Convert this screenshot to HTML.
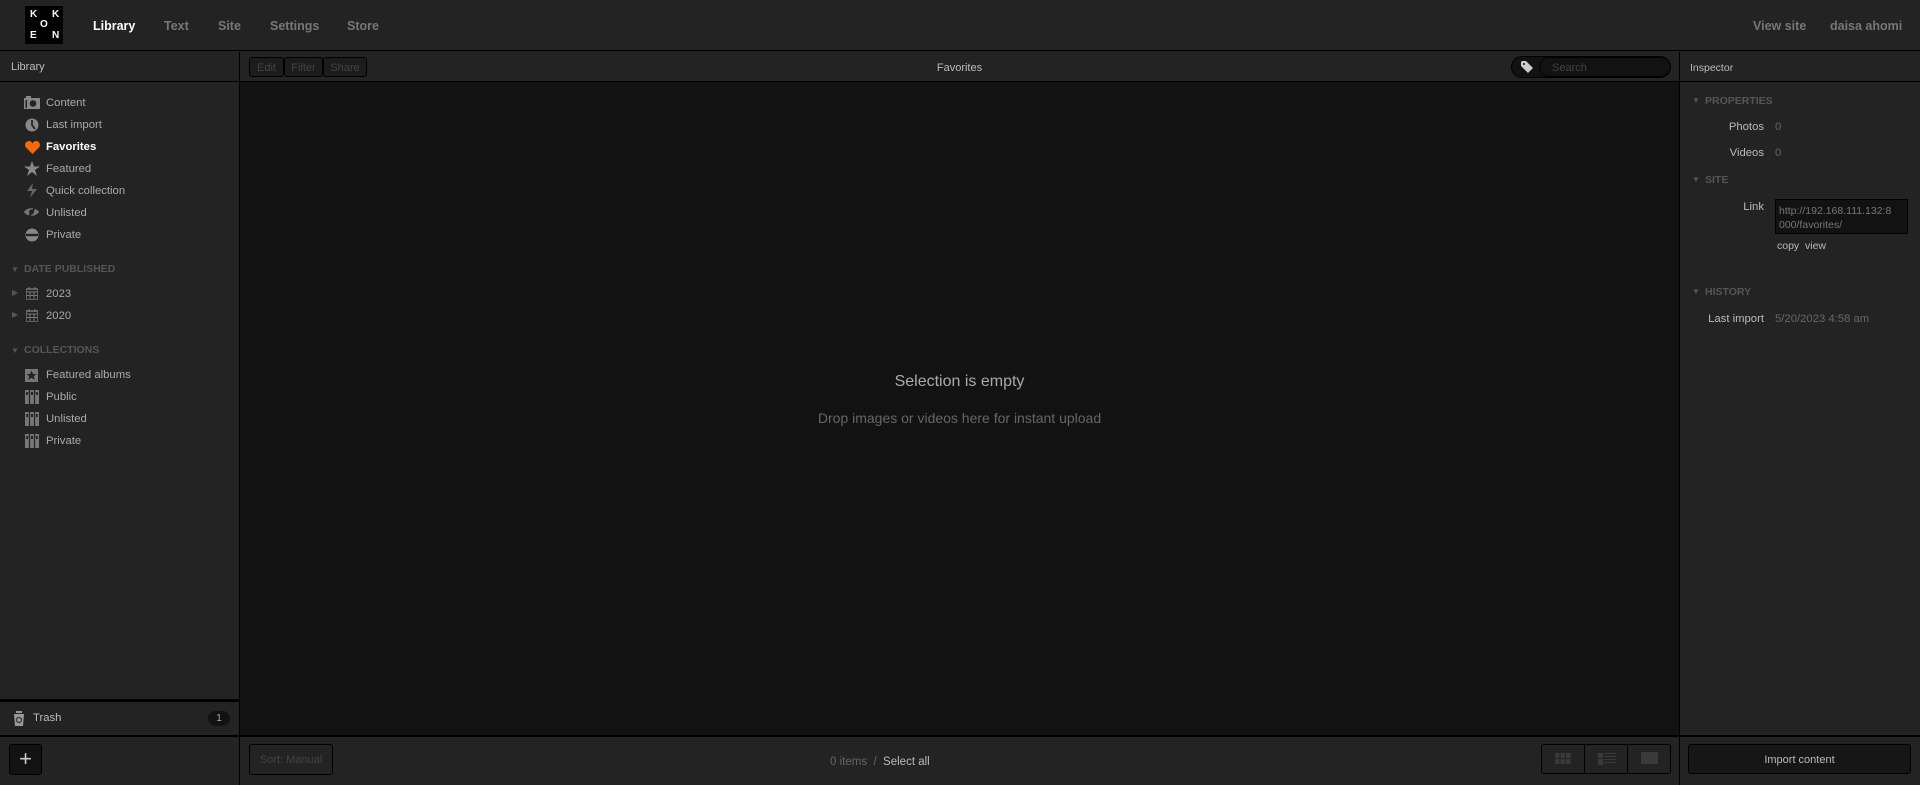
<!DOCTYPE html>
<html><head><meta charset="utf-8"><style>
*{box-sizing:border-box;margin:0;padding:0}
body{width:1920px;height:783px;overflow:hidden;background:#232323;font-family:"Liberation Sans",sans-serif;color:#aaa;position:relative;font-size:12px}
.abs{position:absolute}
#top{left:0;top:0;width:1920px;height:51px;background:#232323;border-bottom:1px solid #000}
.logo{left:25px;top:6px;width:38px;height:38px;background:#000;color:#fff;font-size:10px;font-weight:bold}
.logo span{position:absolute}
.nav{top:19px;font-size:12.5px;font-weight:bold;color:#777}
#left{left:0;top:52px;width:240px;height:683px;background:#232323;border-right:1px solid #000}
#main{left:240px;top:52px;width:1439px;height:683px;background:#121212}
#right{left:1679px;top:52px;width:241px;height:683px;background:#232323;border-left:1px solid #000}
.hdr{height:30px;border-bottom:1px solid #000;background:#232323}
.item{position:absolute;left:46px;font-size:11.3px;color:#aaa}
.ic{position:absolute;left:24px}
.sec{position:absolute;left:24px;font-size:10.5px;font-weight:bold;color:#555}
.tri{position:absolute;font-size:8px;color:#555}
.btn{position:absolute;border:1px solid #000;border-radius:3px;background:#1c1c1c;color:#444;font-size:11px;text-align:center}
#bottom{left:0;top:735px;width:1920px;height:48px;background:#232323;border-top:2px solid #000}
.lbl{position:absolute;text-align:right;color:#bbb;font-size:11.3px}
.val{position:absolute;color:#666;font-size:11.3px}
</style></head><body>
<div id="top" class="abs">
 <div class="logo abs"><span style="left:5px;top:3px">K</span><span style="left:27px;top:3px">K</span><span style="left:15px;top:13px">O</span><span style="left:5px;top:24px">E</span><span style="left:27px;top:24px">N</span></div>
 <div class="nav abs" style="left:93px;color:#fff">Library</div>
 <div class="nav abs" style="left:164px">Text</div>
 <div class="nav abs" style="left:218px">Site</div>
 <div class="nav abs" style="left:270px">Settings</div>
 <div class="nav abs" style="left:347px">Store</div>
 <div class="nav abs" style="left:1753px">View site</div>
 <div class="nav abs" style="left:1830px">daisa ahomi</div>
</div>
<div id="left" class="abs">
 <div class="hdr" style="padding:9px 11px;font-size:11px;color:#bbb">Library</div>
 <svg class="ic" style="top:44px" width="16" height="13" viewBox="0 0 16 13"><rect x="0" y="2" width="16" height="11" fill="#888"/><rect x="2" y="0" width="5" height="3" fill="#888"/><circle cx="9" cy="7.5" r="3.3" fill="#232323"/><rect x="1.5" y="4" width="1.5" height="8" fill="#232323"/></svg>
 <div class="item" style="top:45px">Content</div>
 <svg class="ic" style="top:66px;left:25px" width="14" height="14"><circle cx="7" cy="7" r="6.5" fill="#888"/><path d="M7 2V7L10 11" stroke="#232323" stroke-width="1.8" fill="none"/></svg>
 <div class="item" style="top:67px">Last import</div>
 <svg class="ic" style="top:89px;left:25px" width="15" height="13" viewBox="0 0 15 13"><path d="M7.5 13L1 6.5C-1 4 0.5 0 4 0C6 0 7 1.5 7.5 2.5C8 1.5 9 0 11 0C14.5 0 16 4 14 6.5Z" fill="#f60"/></svg>
 <div class="item" style="top:89px;color:#fff;font-weight:bold">Favorites</div>
 <svg class="ic" style="top:109px" width="16" height="15" viewBox="0 0 16 15"><path d="M8 0L10 5.5H16L11 9L13 15L8 11L3 15L5 9L0 5.5H6Z" fill="#888"/></svg>
 <div class="item" style="top:111px">Featured</div>
 <svg class="ic" style="top:131px;left:26px" width="12" height="15"><path d="M7 0L1 8H6L4 15L11 6H6Z" fill="#666"/></svg>
 <div class="item" style="top:133px">Quick collection</div>
 <svg class="ic" style="top:154px" width="15" height="12"><path d="M0 6C3 1 12 1 15 6C12 11 3 11 0 6Z" fill="#777"/><circle cx="7.5" cy="6" r="2.5" fill="#232323"/><path d="M12 0L4 12" stroke="#232323" stroke-width="2"/></svg>
 <div class="item" style="top:155px">Unlisted</div>
 <svg class="ic" style="top:176px;left:25px" width="14" height="14"><circle cx="7" cy="7" r="6.5" fill="#888"/><rect x="1" y="5.8" width="12" height="2.4" fill="#232323"/></svg>
 <div class="item" style="top:177px">Private</div>
 <div class="tri" style="left:11px;top:213px">▼</div><div class="sec" style="top:211px">DATE PUBLISHED</div>
 <div class="tri" style="left:12px;top:236px">▶</div>
 <svg class="ic" style="top:235px;left:26px" width="12" height="13"><rect x="0" y="2" width="12" height="11" fill="none" stroke="#777" stroke-width="1.4"/><path d="M0 5H12M3 0V3M9 0V3M4 5V12M8 5V12M0 8.5H12" stroke="#777"/></svg>
 <div class="item" style="top:236px">2023</div>
 <div class="tri" style="left:12px;top:258px">▶</div>
 <svg class="ic" style="top:257px;left:26px" width="12" height="13"><rect x="0" y="2" width="12" height="11" fill="none" stroke="#777" stroke-width="1.4"/><path d="M0 5H12M3 0V3M9 0V3M4 5V12M8 5V12M0 8.5H12" stroke="#777"/></svg>
 <div class="item" style="top:258px">2020</div>
 <div class="tri" style="left:11px;top:294px">▼</div><div class="sec" style="top:292px">COLLECTIONS</div>
 <svg class="ic" style="top:317px;left:25px" width="13" height="13"><rect width="13" height="13" fill="#777"/><path d="M6.5 1.5L8 5H11.5L8.8 7.3L9.8 11L6.5 8.8L3.2 11L4.2 7.3L1.5 5H5Z" fill="#232323"/></svg>
 <div class="item" style="top:317px">Featured albums</div>
 <svg class="ic" style="top:338px;left:25px" width="14" height="14"><rect width="14" height="14" fill="#777"/><path d="M4.5 0V14M9.5 0V14" stroke="#232323" stroke-width="1.2"/><rect x="1.2" y="2" width="2" height="3" fill="#232323"/><rect x="6" y="2" width="2" height="3" fill="#232323"/><rect x="10.8" y="2" width="2" height="3" fill="#232323"/></svg>
 <div class="item" style="top:339px">Public</div>
 <svg class="ic" style="top:360px;left:25px" width="14" height="14"><rect width="14" height="14" fill="#777"/><path d="M4.5 0V14M9.5 0V14" stroke="#232323" stroke-width="1.2"/><rect x="1.2" y="2" width="2" height="3" fill="#232323"/><rect x="6" y="2" width="2" height="3" fill="#232323"/><rect x="10.8" y="2" width="2" height="3" fill="#232323"/></svg>
 <div class="item" style="top:361px">Unlisted</div>
 <svg class="ic" style="top:382px;left:25px" width="14" height="14"><rect width="14" height="14" fill="#777"/><path d="M4.5 0V14M9.5 0V14" stroke="#232323" stroke-width="1.2"/><rect x="1.2" y="2" width="2" height="3" fill="#232323"/><rect x="6" y="2" width="2" height="3" fill="#232323"/><rect x="10.8" y="2" width="2" height="3" fill="#232323"/></svg>
 <div class="item" style="top:383px">Private</div>
 <div class="abs" style="left:0;top:647px;width:239px;height:3px;background:#000"></div>
 <svg class="abs" style="left:13px;top:659px" width="12" height="15"><path d="M1 3H11L10 15H2Z" fill="#999"/><rect x="3" y="0" width="6" height="2" fill="#999"/><circle cx="6" cy="9" r="2.5" fill="none" stroke="#333" stroke-width="1.2"/></svg>
 <div class="abs" style="left:33px;top:660px;color:#bbb;font-size:11.3px">Trash</div>
 <div class="abs" style="left:208px;top:659px;width:22px;height:15px;border-radius:8px;background:#121212;color:#aaa;font-size:10px;text-align:center;line-height:15px">1</div>
</div>
<div id="main" class="abs">
 <div class="hdr" style="position:relative">
  <div class="btn" style="left:9px;top:5px;width:35px;height:20px;line-height:20px">Edit</div>
  <div class="btn" style="left:44px;top:5px;width:39px;height:20px;line-height:20px">Filter</div>
  <div class="btn" style="left:83px;top:5px;width:44px;height:20px;line-height:20px">Share</div>
  <div class="abs" style="left:0;width:1439px;top:10px;text-align:center;color:#bbb;font-size:11px">Favorites</div>
  <div class="abs" style="left:1271px;top:4px;width:160px;height:22px;border-radius:11px;background:#121212;border:1px solid #000"></div>
  <div class="abs" style="left:1299px;top:5px;width:132px;height:20px;border-radius:10px;border:1px solid #000;color:#444;font-size:11px;padding:4px 12px">Search</div>
  <svg class="abs" style="left:1281px;top:9px" width="12" height="12"><path d="M0 1V5L7 12L12 7L5 0H1Z" fill="#ccc"/><circle cx="3" cy="3" r="1" fill="#121212"/></svg>
 </div>
 <div class="abs" style="left:0;width:1439px;top:321px;text-align:center;color:#aaa;font-size:16px">Selection is empty</div>
 <div class="abs" style="left:0;width:1439px;top:358px;text-align:center;color:#666;font-size:14px">Drop images or videos here for instant upload</div>
</div>
<div id="right" class="abs">
 <div class="hdr" style="padding:10px 10px;font-size:10.5px;color:#bbb">Inspector</div>
 <div class="tri" style="left:12px;top:44px">▼</div><div class="sec" style="left:25px;top:43px">PROPERTIES</div>
 <div class="lbl" style="left:0;width:84px;top:69px">Photos</div><div class="val" style="left:95px;top:69px">0</div>
 <div class="lbl" style="left:0;width:84px;top:95px">Videos</div><div class="val" style="left:95px;top:95px">0</div>
 <div class="tri" style="left:12px;top:123px">▼</div><div class="sec" style="left:25px;top:122px">SITE</div>
 <div class="lbl" style="left:0;width:84px;top:149px">Link</div>
 <div class="abs" style="left:95px;top:147px;width:133px;height:35px;background:#121212;border:1px solid #000;color:#777;font-size:10.5px;padding:4px 3px;line-height:14px">http://192.168.111.132:8<br>000/favorites/</div>
 <div class="abs" style="left:97px;top:188px;color:#bbb;font-size:10.5px">copy&nbsp; view</div>
 <div class="tri" style="left:12px;top:235px">▼</div><div class="sec" style="left:25px;top:234px">HISTORY</div>
 <div class="lbl" style="left:0;width:84px;top:261px">Last import</div><div class="val" style="left:95px;top:261px">5/20/2023 4:58 am</div>
</div>
<div id="bottom" class="abs">
 <div class="abs" style="left:239px;top:0;width:1px;height:48px;background:#000"></div>
 <div class="abs" style="left:1679px;top:0;width:1px;height:48px;background:#000"></div>
 <div class="btn" style="left:9px;top:7px;width:33px;height:31px;background:#121212;color:#ccc;font-size:22px;line-height:28px">+</div>
 <div class="btn" style="left:249px;top:7px;width:84px;height:31px;line-height:31px;background:#232323;color:#444">Sort: Manual</div>
 <div class="abs" style="left:830px;top:19px;font-size:11.5px;color:#666">0 items&nbsp; /&nbsp; <span style="color:#bbb">Select all</span></div>
 <div class="btn" style="left:1541px;top:7px;width:130px;height:30px;background:#232323"></div>
 <div class="abs" style="left:1584px;top:8px;width:1px;height:28px;background:#000"></div>
 <div class="abs" style="left:1627px;top:8px;width:1px;height:28px;background:#000"></div>
 <svg class="abs" style="left:1555px;top:16px" width="16" height="11"><g fill="#3a3a3a"><rect x="0" y="0" width="4.5" height="5"/><rect x="5.5" y="0" width="4.5" height="5"/><rect x="11" y="0" width="4.5" height="5"/><rect x="0" y="6" width="4.5" height="5"/><rect x="5.5" y="6" width="4.5" height="5"/><rect x="11" y="6" width="4.5" height="5"/></g></svg>
 <svg class="abs" style="left:1598px;top:16px" width="18" height="12"><g fill="#3a3a3a"><rect x="0" y="0" width="5" height="5"/><rect x="0" y="6" width="5" height="6"/><rect x="6" y="0" width="12" height="1"/><rect x="6" y="3" width="12" height="1"/><rect x="6" y="6" width="12" height="1"/><rect x="6" y="9" width="12" height="1"/></g></svg>
 <div class="abs" style="left:1641px;top:15px;width:17px;height:12px;background:#3a3a3a"></div>
 <div class="btn" style="left:1688px;top:7px;width:223px;height:30px;line-height:31px;background:#161616;color:#bbb;font-size:11px">Import content</div>
</div>
</body></html>
